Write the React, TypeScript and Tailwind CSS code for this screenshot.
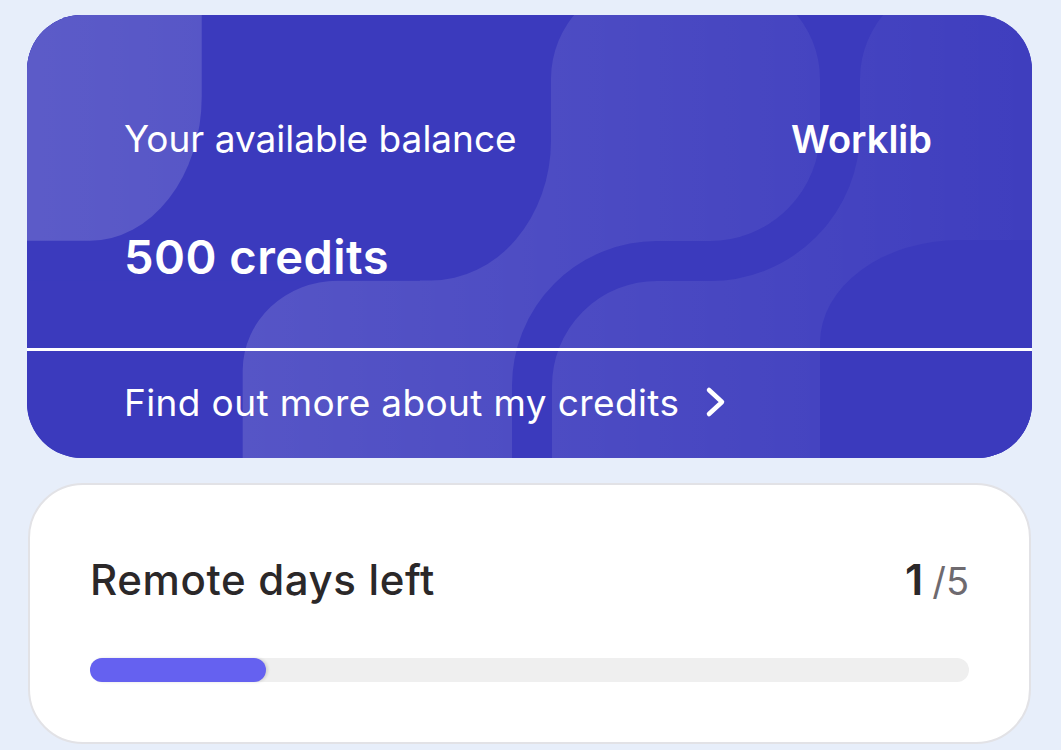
import React from "react";

const font = { fontFamily: "Inter, 'Noto Sans', sans-serif" };

function CardPattern() {
  return (
    <svg
      className="absolute inset-0 h-full w-full"
      viewBox="27 15 1005 443"
      preserveAspectRatio="none"
      aria-hidden="true"
    >
      <defs>
        <linearGradient id="glow" gradientUnits="userSpaceOnUse" x1="27" y1="0" x2="1032" y2="0">
          <stop offset="0" stopColor="#ffffff" stopOpacity="0.17" />
          <stop offset="1" stopColor="#ffffff" stopOpacity="0.02" />
        </linearGradient>
      </defs>
      <rect x="0" y="0" width="1100" height="500" fill="#3b3abd" />
      {/* light areas */}
      <g fill="url(#glow)">
        <path d="M 242.7 370 A 95 90 0 0 1 337.7 280.7 L 420 280.7 L 420 130 L 551 130 L 551 79 A 100 100 0 0 1 651 -21 L 1100 -21 L 1100 500 L 242.7 500 Z" />
      </g>
      {/* dark cut-outs */}
      <g fill="#3b3abd">
        <rect x="-300" y="-300" width="851" height="580.5" rx="120" ry="140" />
        <path d="M 720 -21 A 100 100 0 0 1 820 79 L 820 -21 Z" />
        <path d="M 860 -21 L 860 79 A 100 100 0 0 1 960 -21 Z" />
        <rect x="820" y="240" width="1000" height="500" rx="140" ry="103" />
      </g>
      <path
        d="M 840 -30 V 131 A 130 130 0 0 1 710 261 H 657 A 125 125 0 0 0 532 386 V 520"
        fill="none"
        stroke="#3b3abd"
        strokeWidth="40"
      />
      <rect x="-300" y="-300" width="501.7" height="540.7" rx="112" ry="144" fill="url(#glow)" />
    </svg>
  );
}

export default function App() {
  return (
    <div className="min-h-[750px] bg-[#e7eefa] pl-[27px] pr-[29px] pt-[15px]" style={font}>
      <div className="relative overflow-hidden rounded-[55px] bg-[#3b3abd] text-white">
        <CardPattern />
        <div className="relative">
          <div className="h-[333px] pl-[97px] pr-[100px] pt-[102px]">
            <div className="flex items-start justify-between">
              <span className="text-[37px] leading-[44px] font-normal">Your available balance</span>
              <span className="text-[38px] leading-[44px] font-semibold">Worklib</span>
            </div>
            <div className="mt-[68px] text-[47px] leading-[56px] font-semibold tracking-[0.01em]">500 credits</div>
          </div>
          <div className="h-[3px] bg-white" />
          <div className="flex h-[107px] items-start pl-[97px] pt-[30px]">
            <span className="text-[37px] leading-[44px] font-normal tracking-[0.01em]">Find out more about my credits</span>
            <svg className="ml-[26px] mt-[5px]" width="22" height="32" viewBox="0 0 22 32" fill="none">
              <path d="M 4 4 L 17 16 L 4 28" stroke="white" strokeWidth="4.5" strokeLinecap="round" strokeLinejoin="round" />
            </svg>
          </div>
        </div>
      </div>

      <div className="mx-[1px] mt-[25px] rounded-[55px] border-2 border-[#e2e2e6] bg-white px-[60px] pb-[60px] pt-[70px]">
        <div className="flex items-baseline justify-between">
          <span className="text-[42px] leading-[48px] font-medium tracking-[0.015em] text-[#2b2829]">Remote days left</span>
          <span className="leading-[48px]">
            <span className="text-[43px] font-semibold text-[#2b2829]">1</span>
            <span className="ml-[9px] text-[38px] text-[#6e6a6f]">/5</span>
          </span>
        </div>
        <div className="mt-[45px] h-[24px] rounded-full bg-[#efefef]">
          <div className="h-full w-[20%] rounded-full bg-[#6561f0] shadow-[2px_0_3px_rgba(0,0,0,0.12)]" />
        </div>
      </div>
    </div>
  );
}
